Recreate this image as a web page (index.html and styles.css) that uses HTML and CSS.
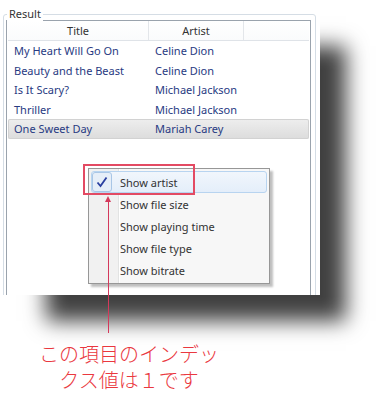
FILE: index.html
```html
<!DOCTYPE html>
<html lang="ja">
<head>
    <meta charset="UTF-8">
    <title>Result</title>
    <link rel="stylesheet" href="styles.css">
</head>
<body>

<div class="page">
    <div class="window">
        <div class="group">
            <span class="group-title">Result</span>
            <div class="list">
                <div class="list-header">
                    <div class="col col-title">Title</div>
                    <div class="col col-artist">Artist</div>
                    <div class="col col-rest"></div>
                </div>
                <div class="row"><span class="cell-title">My Heart Will Go On</span><span class="cell-artist">Celine Dion</span></div>
                <div class="row"><span class="cell-title">Beauty and the Beast</span><span class="cell-artist">Celine Dion</span></div>
                <div class="row"><span class="cell-title">Is It Scary?</span><span class="cell-artist">Michael Jackson</span></div>
                <div class="row"><span class="cell-title">Thriller</span><span class="cell-artist">Michael Jackson</span></div>
                <div class="row selected"><span class="cell-title">One Sweet Day</span><span class="cell-artist">Mariah Carey</span></div>
            </div>
        </div>

        <ul class="menu">
            <li class="menu-item checked">
                <span class="check">
                    <svg width="12" height="12" viewBox="0 0 12 12"><path d="M1.5 6.5 L4.5 10 L10.5 1.5" fill="none" stroke="#2a3fa0" stroke-width="1.8"/></svg>
                </span>
                <span class="label">Show artist</span>
            </li>
            <li class="menu-item"><span class="check"></span><span class="label">Show file size</span></li>
            <li class="menu-item"><span class="check"></span><span class="label">Show playing time</span></li>
            <li class="menu-item"><span class="check"></span><span class="label">Show file type</span></li>
            <li class="menu-item"><span class="check"></span><span class="label">Show bitrate</span></li>
        </ul>
    </div>

    <div class="caption">この項目のインデッ<br>クス値は１です</div>

    <!-- callout -->
    <div class="callout-box"></div>
    <div class="callout-line"></div>
    <div class="callout-head"></div>
</div>

</body>
</html>
```

FILE: styles.css
```css
body {
    margin: 0;
    padding: 0;
    background-color: #fff;
    font-family: "Noto Sans", "Open Sans", sans-serif;
}

.page {
    position: relative;
    width: 380px;
    height: 404px;
    overflow: hidden;
}

.window {
    position: relative;
    width: 320px;
    height: 295px;
    background-color: #fff;
    box-shadow: 36px 36px 20px -10px rgba(0, 0, 0, 0.75);
    overflow: hidden;
}

.group {
    position: relative;
    margin: 14px 4px 0 3px;
    height: 300px;
    border: 1px solid #d5dde5;
    border-radius: 3px;
    padding: 5px 4px 0 2px;
    box-sizing: border-box;
}

.group-title {
    position: absolute;
    top: -9px;
    left: 3px;
    padding: 0 2px;
    background-color: #fff;
    font-size: 11px;
    line-height: 16px;
    color: #333;
}

.list {
    height: 290px;
    border: 1px solid #9aa3ad;
    padding: 0 1px;
}

.list-header {
    display: flex;
    height: 19px;
    border-bottom: 1px solid #dfe3e8;
    background: linear-gradient(#fff, #fafbfc);
    font-size: 11px;
    line-height: 19px;
    color: #333;
}

.col {
    text-align: center;
    border-right: 1px solid #e3e6ea;
    box-sizing: border-box;
}

.col-title {
    width: 141px;
}

.col-artist {
    width: 95px;
}

.col-rest {
    flex: 1;
    border-right: none;
}

.row {
    display: flex;
    height: 19.5px;
    font-size: 11px;
    line-height: 19px;
    color: #283a82;
}

.cell-title {
    width: 141px;
    padding-left: 6px;
    box-sizing: border-box;
}

.cell-artist {
    padding-left: 6px;
}

.row.selected {
    background: linear-gradient(#eeeeee, #dcdcdc);
    box-shadow: inset 0 0 0 1px #d2d2d2;
    border-radius: 2px;
}

.menu {
    position: absolute;
    left: 88px;
    top: 168px;
    width: 182px;
    margin: 0;
    padding: 2px;
    list-style: none;
    box-sizing: border-box;
    background: linear-gradient(to right, #f1f1f1 29px, #e2e3e3 29px, #e2e3e3 30px, #fff 30px, #fff 31px, #f7f7f7 31px);
    border: 1px solid #979797;
    box-shadow: 3px 3px 2px rgba(0, 0, 0, 0.25);
    font-size: 11px;
    color: #333;
}

.menu-item {
    display: flex;
    align-items: center;
    height: 22px;
    border: 1px solid transparent;
    border-radius: 3px;
    box-sizing: border-box;
}

.menu-item.checked {
    background: linear-gradient(#f1f6fc, #e4eefa);
    border-color: #b8d4f0;
}

.check {
    display: flex;
    align-items: center;
    justify-content: center;
    width: 20px;
    height: 20px;
    margin-right: 8px;
    box-sizing: border-box;
}

.menu-item.checked .check {
    border: 1px solid #a9c6e6;
    border-radius: 3px;
    background-color: #e6eef8;
}

.caption {
    width: 220px;
    margin: 46px 0 0 19px;
    text-align: center;
    font-family: "Noto Sans CJK JP", sans-serif;
    font-weight: 300;
    font-size: 20px;
    line-height: 26px;
    color: #ea3840;
}

.callout-box {
    position: absolute;
    left: 83px;
    top: 164px;
    width: 112px;
    height: 31px;
    border: 2px solid #e34a63;
    box-sizing: border-box;
}

.callout-line {
    position: absolute;
    left: 108px;
    top: 200px;
    width: 1px;
    height: 133px;
    background-color: #d43a5c;
}

.callout-head {
    position: absolute;
    left: 105px;
    top: 196px;
    width: 0;
    height: 0;
    border-left: 3.5px solid transparent;
    border-right: 3.5px solid transparent;
    border-bottom: 6px solid #d43a5c;
}
```
